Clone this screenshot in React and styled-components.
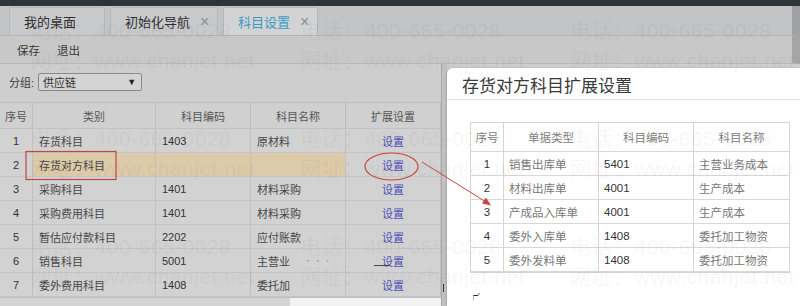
import React from 'react';
import styled, { createGlobalStyle } from 'styled-components';

const GlobalStyle = createGlobalStyle`
  html, body {
    margin: 0;
    padding: 0;
    background: #cecece;
  }
  body {
    font-family: "Liberation Sans", "Noto Sans CJK SC", sans-serif;
  }
`;

const baseRows = [
  { no: 1, type: '存货科目', code: '1403', name: '原材料' },
  { no: 2, type: '存货对方科目', code: '', name: '', active: true },
  { no: 3, type: '采购科目', code: '1401', name: '材料采购' },
  { no: 4, type: '采购费用科目', code: '1401', name: '材料采购' },
  { no: 5, type: '暂估应付款科目', code: '2202', name: '应付账款' },
  { no: 6, type: '销售科目', code: '5001', name: '主营业', cut: true },
  { no: 7, type: '委外费用科目', code: '1408', name: '委托加' },
];

const modalRows = [
  { no: 1, bill: '销售出库单', code: '5401', name: '主营业务成本' },
  { no: 2, bill: '材料出库单', code: '4001', name: '生产成本' },
  { no: 3, bill: '产成品入库单', code: '4001', name: '生产成本' },
  { no: 4, bill: '委外入库单', code: '1408', name: '委托加工物资' },
  { no: 5, bill: '委外发料单', code: '1408', name: '委托加工物资' },
];

const App = () => (
  <Page>
    <GlobalStyle />
    <TopBar />
    <TabBar>
      <Tab width={96}>我的桌面</Tab>
      <Tab width={108}>
        初始化导航<Close>×</Close>
      </Tab>
      <Tab width={95} active>
        科目设置<Close>×</Close>
      </Tab>
    </TabBar>
    <Toolbar>
      <ToolButton>保存</ToolButton>
      <ToolButton>退出</ToolButton>
    </Toolbar>
    <Body>
      <Main>
        <FilterRow>
          <Label>分组:</Label>
          <Select>
            <span>供应链</span>
            <Caret>▼</Caret>
          </Select>
        </FilterRow>
        <Grid>
          <HeadCell>序号</HeadCell>
          <HeadCell>类别</HeadCell>
          <HeadCell>科目编码</HeadCell>
          <HeadCell>科目名称</HeadCell>
          <HeadCell>扩展设置</HeadCell>
          {baseRows.map(r => (
            <React.Fragment key={r.no}>
              <Cell center num>{r.no}</Cell>
              <Cell hl={r.active}>{r.type}</Cell>
              <Cell hl={r.active} num>{r.code}</Cell>
              <Cell hl={r.active}>
                {r.name}
                {r.cut && <Dots>· · ·</Dots>}
              </Cell>
              <Cell center>
                <Link>设置</Link>
                {r.cut && <Scratch />}
              </Cell>
            </React.Fragment>
          ))}
        </Grid>
        <Blank />
      </Main>
      <ScrollEdge>
        <Tick />
      </ScrollEdge>
    </Body>

    <Modal>
      <ModalTitle>存货对方科目扩展设置</ModalTitle>
      <ModalBody>
        <MGrid>
          <MHead>序号</MHead>
          <MHead>单据类型</MHead>
          <MHead>科目编码</MHead>
          <MHead>科目名称</MHead>
          {modalRows.map(r => (
            <React.Fragment key={r.no}>
              <MCell center num>{r.no}</MCell>
              <MCell>{r.bill}</MCell>
              <MCell num>{r.code}</MCell>
              <MCell>{r.name}</MCell>
            </React.Fragment>
          ))}
        </MGrid>
        <Crumb>┍'</Crumb>
      </ModalBody>
    </Modal>

    <Watermark>
      {Array.from({ length: 9 }).map((_, i) => (
        <MarkCell key={i}>
          <span>电话：400-665-0028</span>
          <span>网址：www.chanjet.net</span>
        </MarkCell>
      ))}
    </Watermark>

    <Annotations width="800" height="306" viewBox="0 0 800 306">
      <rect x="26" y="151.5" width="90" height="28" fill="none" stroke="#c4473f" strokeWidth="1.2" />
      <ellipse cx="391.5" cy="166.5" rx="26.5" ry="13.5" fill="none" stroke="#c4473f" strokeWidth="1.2" />
      <line x1="422" y1="162" x2="486" y2="202" stroke="#c4473f" strokeWidth="1" />
      <polygon points="491,205.5 482,203.5 486,197.5" fill="#c4473f" />
    </Annotations>
  </Page>
);

const Page = styled.div`
  position: relative;
  width: 800px;
  height: 306px;
  overflow: hidden;
  background: #cecece;
  color: #3a3a3a;
`;

const TopBar = styled.div`
  height: 6px;
  background: #2f3439;
`;

const TabBar = styled.div`
  display: flex;
  align-items: flex-end;
  gap: 5px;
  height: 29px;
  padding-left: 9px;
  background: #c3c4c6;
  border-bottom: 1px solid #b2b3b5;
  border-right: 8px solid #9fa1a4;
`;

const Tab = styled.div`
  box-sizing: border-box;
  width: ${p => p.width}px;
  height: 28px;
  display: flex;
  align-items: center;
  padding-left: 14px;
  gap: 10px;
  font-size: 13px;
  color: ${p => (p.active ? '#3c9bc4' : '#303030')};
  background: ${p => (p.active ? '#d2d3d5' : '#c8c9cb')};
  border: 1px solid #b4b6b9;
  border-bottom: none;
  border-radius: 2px 2px 0 0;
`;

const Close = styled.span`
  font-size: 16px;
  color: #8e8f92;
  line-height: 1;
`;

const Toolbar = styled.div`
  display: flex;
  align-items: center;
  gap: 17px;
  height: 27px;
  padding-left: 17px;
  background: #c8c8c8;
  border-bottom: 1px solid #b8b8b8;
  border-right: 8px solid #a3a5a7;
`;

const ToolButton = styled.span`
  font-size: 11.5px;
  color: #3a3a3a;
`;

const Body = styled.div`
  display: flex;
  height: 242px;
`;

const Main = styled.div`
  width: 441px;
  display: flex;
  flex-direction: column;
`;

const FilterRow = styled.div`
  display: flex;
  align-items: center;
  gap: 4px;
  height: 38px;
  padding-left: 9px;
  padding-bottom: 2px;
  box-sizing: border-box;
`;

const Label = styled.span`
  font-size: 11px;
  color: #3a3a3a;
`;

const Select = styled.div`
  box-sizing: border-box;
  width: 104px;
  height: 18px;
  display: flex;
  align-items: center;
  justify-content: space-between;
  padding: 0 5px 0 4px;
  font-size: 11px;
  color: #333;
  background: #d4d4d4;
  border: 1px solid #8a8a8a;
  border-radius: 2px;
`;

const Caret = styled.span`
  font-size: 9px;
  color: #222;
`;

const Grid = styled.div`
  display: grid;
  grid-template-columns: 33px 123px 95px 95px 95px;
  grid-template-rows: 26px repeat(7, 24px);
  border-top: 1px solid #bdbdbd;
  border-bottom: 1px solid #bdbdbd;
  background: #d2d2d2;
`;

const HeadCell = styled.div`
  display: flex;
  align-items: center;
  justify-content: center;
  font-size: 11px;
  color: #555;
  border-right: 1px solid #bdbdbd;
  border-bottom: 1px solid #c2c2c2;
  background: #d0d0d0;
`;

const Cell = styled.div`
  position: relative;
  display: flex;
  align-items: center;
  justify-content: ${p => (p.center ? 'center' : 'flex-start')};
  padding-left: ${p => (p.center ? 0 : 6)}px;
  font-size: 11px;
  font-family: ${p => (p.num ? '"Liberation Sans", sans-serif' : '"Noto Sans CJK SC", sans-serif')};
  color: ${p => (p.num ? '#333' : '#474747')};
  background: ${p => (p.hl ? '#dccaa8' : 'transparent')};
  border-right: 1px solid #c0c0c0;
  border-bottom: 1px solid #c4c4c4;
`;

const Link = styled.span`
  font-family: "Noto Sans CJK SC", sans-serif;
  font-size: 11px;
  color: #5050b8;
`;

const Dots = styled.span`
  margin-left: 14px;
  font-size: 8px;
  color: #8d9ec4;
`;

const Scratch = styled.span`
  position: absolute;
  left: 28px;
  bottom: 6px;
  width: 16px;
  height: 1px;
  background: #4a4a4a;
`;

const Blank = styled.div`
  flex: 1;
  background: linear-gradient(90deg, #d4d4d4 0 290px, #f2f2f2 290px);
`;

const ScrollEdge = styled.div`
  position: relative;
  width: 5px;
  background: #c2c2c2;
  border-left: 1px solid #a9a9a9;
`;

const Tick = styled.span`
  position: absolute;
  left: 1px;
  bottom: 14px;
  width: 1px;
  height: 8px;
  background: #333;
`;

const Modal = styled.div`
  position: absolute;
  left: 447px;
  top: 68px;
  right: 0;
  bottom: 0;
  background: #fff;
  border-top-left-radius: 6px;
  box-shadow: -1px 0 2px rgba(0, 0, 0, 0.15);
  display: flex;
  flex-direction: column;
`;

const ModalTitle = styled.div`
  height: 32px;
  display: flex;
  align-items: center;
  padding-left: 15px;
  padding-top: 2px;
  box-sizing: border-box;
  font-family: "Noto Sans CJK SC", sans-serif;
  font-size: 17px;
  color: #3a3a3a;
  border-bottom: 1px solid #e6e6e6;
`;

const ModalBody = styled.div`
  position: relative;
  flex: 1;
  padding: 22px 0 0 23px;
`;

const MGrid = styled.div`
  display: grid;
  width: 319px;
  grid-template-columns: 33px 95px 95px 96px;
  grid-template-rows: 29px repeat(5, 24px);
  border: 1px solid #d4d4d4;
  border-right: none;
`;

const MHead = styled.div`
  display: flex;
  align-items: center;
  justify-content: center;
  font-family: "Noto Sans CJK SC", sans-serif;
  font-size: 11.5px;
  color: #808080;
  border-right: 1px solid #d4d4d4;
  border-bottom: 1px solid #d8d8d8;
`;

const MCell = styled.div`
  display: flex;
  align-items: center;
  justify-content: ${p => (p.center ? 'center' : 'flex-start')};
  padding-left: ${p => (p.center ? 0 : 5)}px;
  font-family: ${p => (p.num ? '"Liberation Sans", sans-serif' : '"Noto Sans CJK SC", sans-serif')};
  font-size: 11.5px;
  color: ${p => (p.num ? '#333' : '#787878')};
  border-right: 1px solid #d4d4d4;
  border-bottom: 1px solid #d8d8d8;
`;

const Crumb = styled.span`
  position: absolute;
  left: 22px;
  bottom: 4px;
  font-size: 9px;
  color: #222;
`;

const Watermark = styled.div`
  position: absolute;
  inset: 0;
  pointer-events: none;
  display: grid;
  grid-template-columns: repeat(3, 270px);
  grid-auto-rows: 108px;
  padding: 21px 0 0 30px;
`;

const MarkCell = styled.div`
  display: flex;
  flex-direction: column;
  gap: 10px;
  font-family: "Liberation Sans", "Noto Sans CJK SC", sans-serif;
  font-size: 21px;
  line-height: 20px;
  letter-spacing: 0.5px;
  color: rgba(0, 0, 0, 0.055);
  white-space: nowrap;
`;

const Annotations = styled.svg`
  position: absolute;
  left: 0;
  top: 0;
  pointer-events: none;
`;

export default App;
